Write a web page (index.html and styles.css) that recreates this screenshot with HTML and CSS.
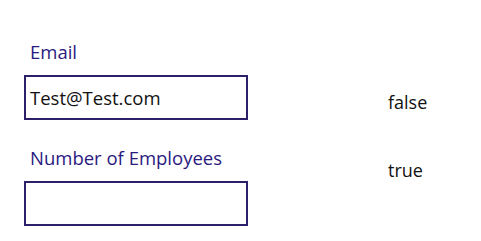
FILE: index.html
```html
<!DOCTYPE html>
<html lang="en">
<head>
  <meta charset="UTF-8" />
  <title>Form</title>
  <link rel="stylesheet" href="styles.css">
</head>
<body>
  <div class="page">
    <!-- Campos del formulario -->
    <div class="fields">
      <label class="label" for="email">Email</label>
      <input class="box" id="email" type="text" value="Test@Test.com">
      <label class="label" for="employees">Number of Employees</label>
      <input class="box" id="employees" type="text" value="">
    </div>

    <!-- Resultados -->
    <div class="results">
      <div class="result first">false</div>
      <div class="result">true</div>
    </div>
  </div>
</body>
</html>
```

FILE: styles.css
```css
body {
  margin: 0;
  background: #fff;
  font-family: 'Open Sans', 'Noto Sans', sans-serif;
  overflow: hidden;
}

.page {
  display: flex;
  padding: 40px 0 0 24px;
}

.fields {
  display: flex;
  flex-direction: column;
  width: 224px;
}

.label {
  color: #2a1a80;
  font-size: 18.5px;
  line-height: 24px;
  padding-left: 6px;
  margin-bottom: 11px;
}

.box {
  box-sizing: border-box;
  width: 224px;
  height: 45px;
  margin: 0 0 26px 0;
  border: 2px solid #2e1f6b;
  padding: 0 0 0 4px;
  font-family: 'Open Sans', 'Noto Sans', sans-serif;
  font-size: 18.5px;
  color: #111;
  outline: none;
}

.results {
  display: flex;
  flex-direction: column;
  margin-left: 140px;
}

.result {
  font-size: 18px;
  line-height: 24px;
  color: #111;
}

.first {
  margin-top: 50px;
  margin-bottom: 44px;
}
```
